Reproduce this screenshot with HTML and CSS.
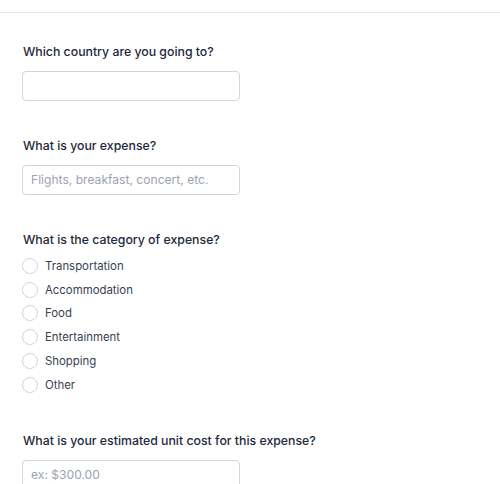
FILE: index.html
```html
<!DOCTYPE html>
<html lang="en">
<head>
<meta charset="utf-8">
<title>Expense form</title>
<link rel="stylesheet" href="styles.css">
</head>
<body>
<div class="topbar"></div>
<form class="form">
  <div class="field">
    <label class="question">Which country are you going to?</label>
    <div class="input"></div>
  </div>
  <div class="field">
    <label class="question">What is your expense?</label>
    <div class="input"><span class="placeholder">Flights, breakfast, concert, etc.</span></div>
  </div>
  <div class="field">
    <label class="question">What is the category of expense?</label>
    <div class="options">
      <div class="option"><span class="radio"></span><span class="option-text">Transportation</span></div>
      <div class="option"><span class="radio"></span><span class="option-text">Accommodation</span></div>
      <div class="option"><span class="radio"></span><span class="option-text">Food</span></div>
      <div class="option"><span class="radio"></span><span class="option-text">Entertainment</span></div>
      <div class="option"><span class="radio"></span><span class="option-text">Shopping</span></div>
      <div class="option"><span class="radio"></span><span class="option-text">Other</span></div>
    </div>
  </div>
  <div class="field field-last">
    <label class="question">What is your estimated unit cost for this expense?</label>
    <div class="input"><span class="placeholder">ex: $300.00</span></div>
  </div>
</form>
</body>
</html>
```
FILE: styles.css
```css
html, body {
  margin: 0;
  padding: 0;
  background: #ffffff;
  font-family: "Inter", "Liberation Sans", sans-serif;
  overflow: hidden;
}

.topbar {
  height: 12px;
  border-bottom: 1px solid #e5e7eb;
}

.form {
  display: flex;
  flex-direction: column;
  gap: 35.5px;
  padding: 29px 22px 0 22px;
}

.field {
  display: flex;
  flex-direction: column;
}

.question {
  display: block;
  font-size: 12.3px;
  line-height: 20px;
  font-weight: 500;
  color: #1e293b;
  padding-left: 1px;
  margin-bottom: 8.5px;
}

.input {
  box-sizing: border-box;
  width: 218px;
  height: 30px;
  border: 1px solid #d1d5db;
  border-radius: 4px;
  display: flex;
  align-items: center;
  padding: 0 8px;
}

.placeholder {
  font-size: 12.1px;
  color: #9ca3af;
}

.options {
  display: flex;
  flex-direction: column;
  margin-top: -4.5px;
}

.option {
  display: flex;
  align-items: center;
  height: 23.8px;
}

.radio {
  box-sizing: border-box;
  width: 16px;
  height: 16px;
  border: 1px solid #d1d5db;
  border-radius: 50%;
  background: #fff;
  margin-right: 7px;
}

.option-text {
  font-size: 11.4px;
  color: #374151;
}

.field-last {
  margin-top: -1px;
}
```
